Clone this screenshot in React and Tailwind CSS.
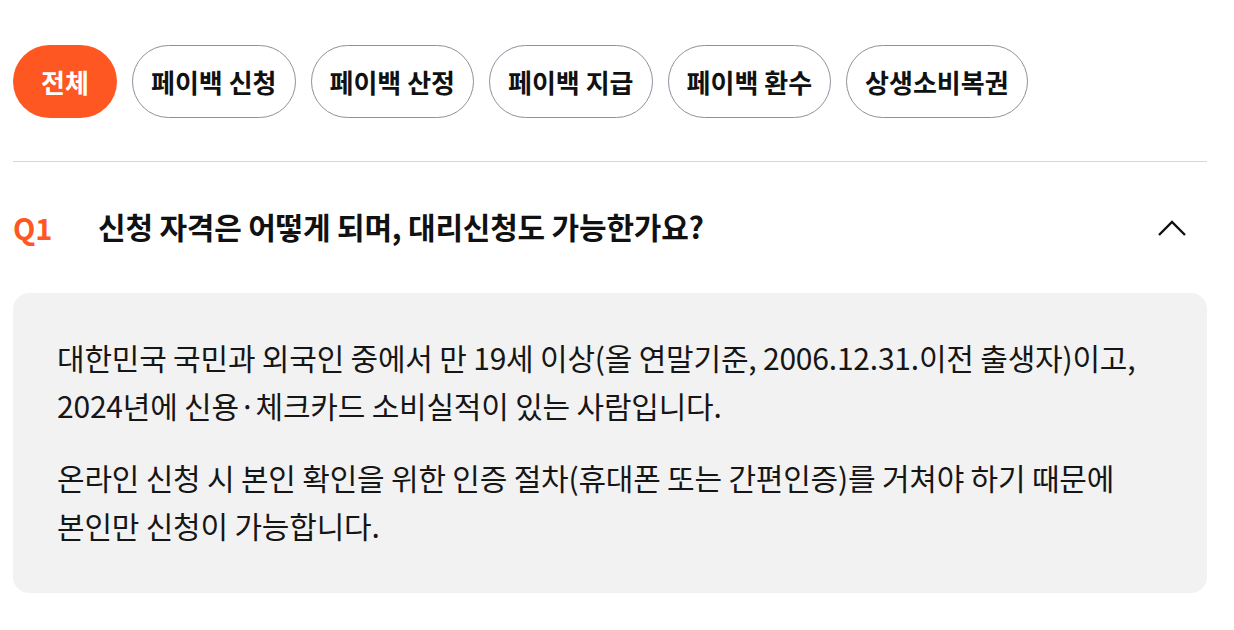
import React from "react";

const tabs = ["페이백 신청", "페이백 산정", "페이백 지급", "페이백 환수", "상생소비복권"];

export default function App() {
  return (
    <div
      className="w-[1234px] h-[630px] bg-white px-[13px] pt-[45px] text-[#111111]"
      style={{ fontFamily: '"Noto Sans CJK KR", "Noto Sans", sans-serif' }}
    >
      <div className="w-[1194px]">
        <div className="flex gap-[15px]">
          <button className="h-[73px] w-[104px] rounded-full bg-[#ff5722] text-white text-[26px] font-bold">
            전체
          </button>
          {tabs.map((t) => (
            <button
              key={t}
              className="h-[73px] px-[18px] rounded-full border border-[#8f909c] bg-white text-[26px] font-bold text-[#111111]"
            >
              {t}
            </button>
          ))}
        </div>
        <div className="mt-[43px] h-px bg-[#d6d6de]" />
        <div className="flex items-center h-[131px]">
          <span className="w-[85px] text-[29px] font-bold text-[#ff5722]">Q1</span>
          <span className="flex-1 text-[30px] font-bold tracking-[-0.2px] pb-[2px]">
            신청 자격은 어떻게 되며, 대리신청도 가능한가요?
          </span>
          <svg width="30" height="18" viewBox="0 0 30 18" className="mr-[20px]">
            <polyline points="2,16 15,3 28,16" fill="none" stroke="#111111" strokeWidth="2.4" />
          </svg>
        </div>
        <div className="rounded-[16px] bg-[#f2f2f2] pl-[44px] pr-[30px] pt-[40px] pb-[44px] text-[30px] leading-[48px] tracking-[-0.2px] text-[#161616]">
          <p>
            대한민국 국민과 외국인 중에서 만 19세 이상(올 연말기준, 2006.12.31.이전 출생자)이고,
            <br />
            2024년에 신용·체크카드 소비실적이 있는 사람입니다.
          </p>
          <p className="mt-[24px]">
            온라인 신청 시 본인 확인을 위한 인증 절차(휴대폰 또는 간편인증)를 거쳐야 하기 때문에
            <br />
            본인만 신청이 가능합니다.
          </p>
        </div>
      </div>
    </div>
  );
}
